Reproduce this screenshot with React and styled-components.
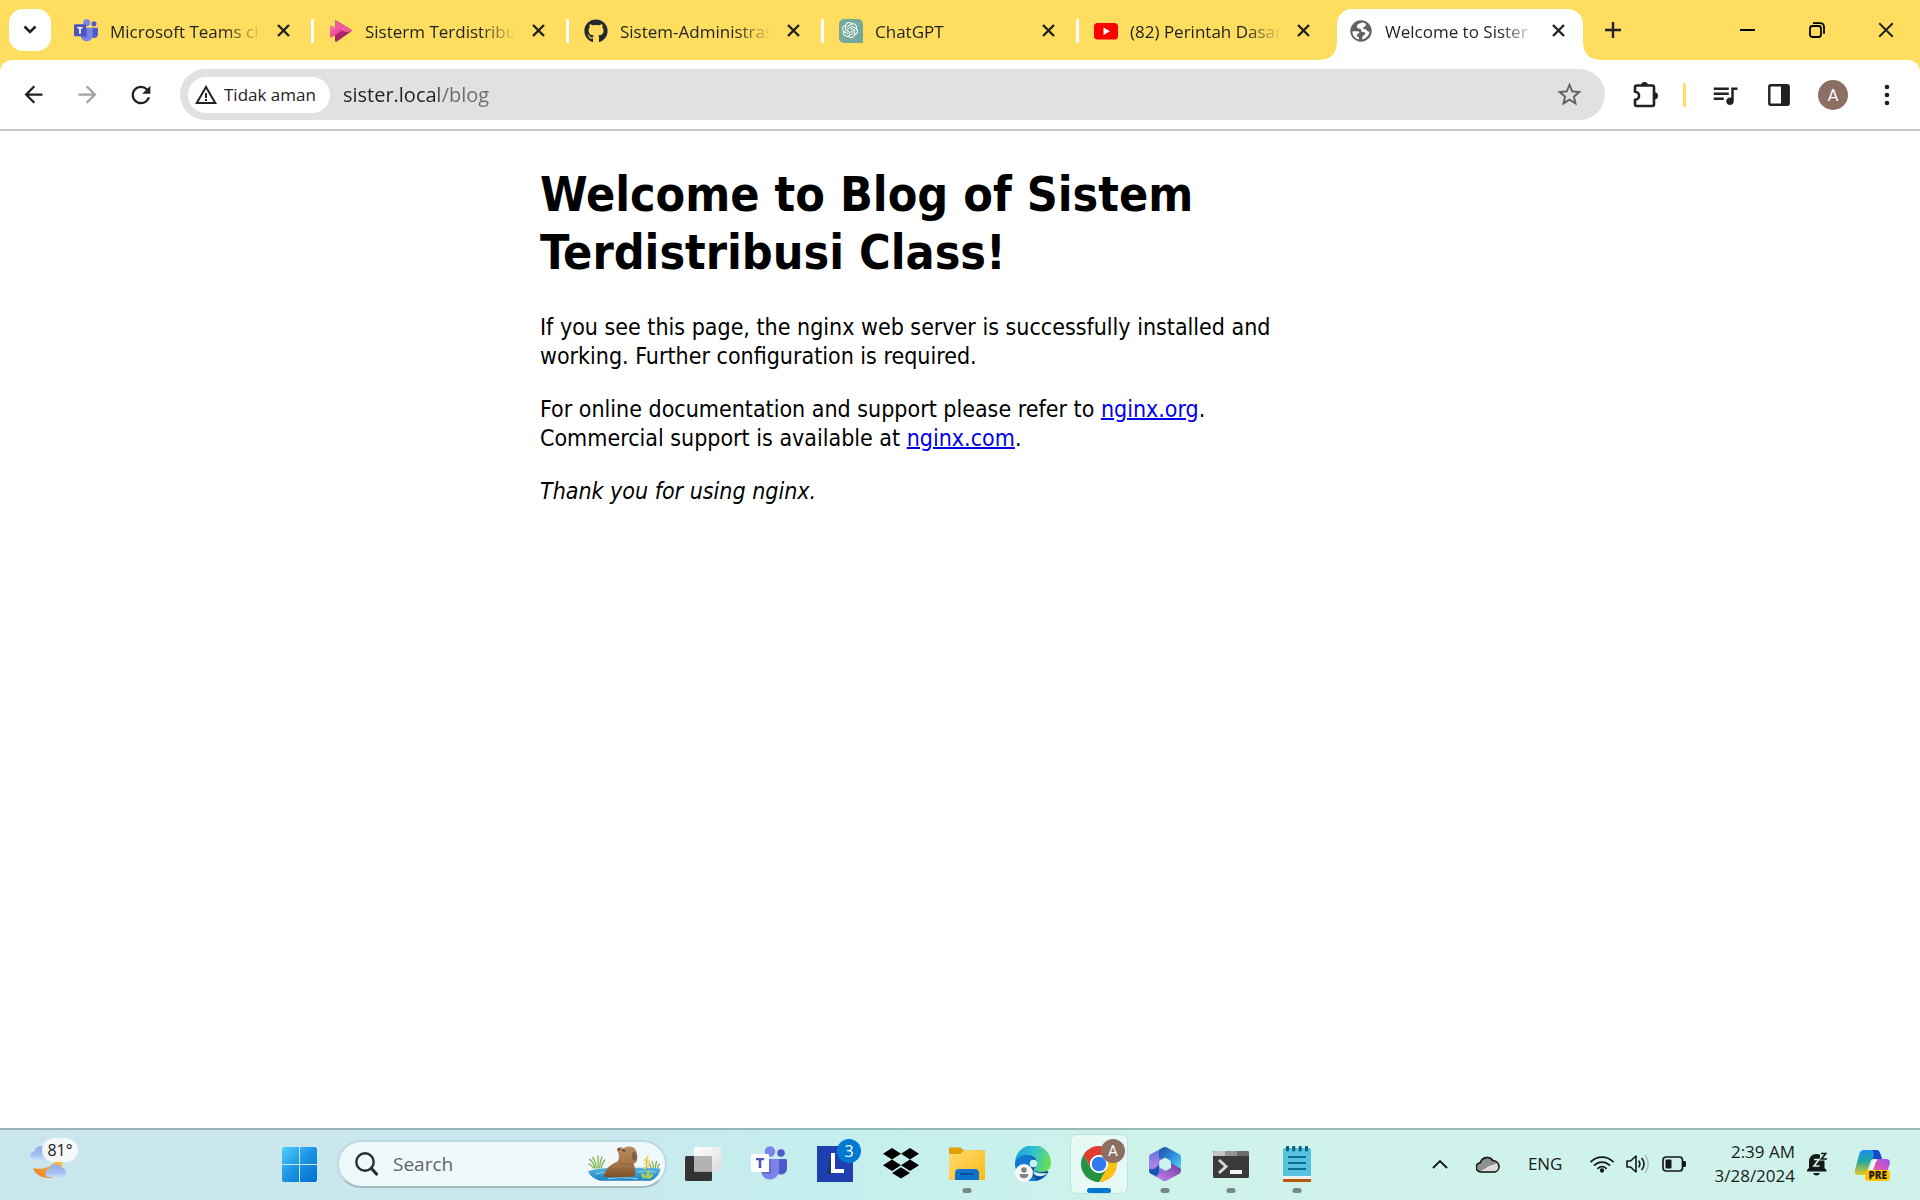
import React from "react";
import styled, { createGlobalStyle, css } from "styled-components";
import { FaGithub } from "react-icons/fa";
import { SiOpenai } from "react-icons/si";
import {
  MdArrowBack,
  MdArrowForward,
  MdRefresh,
  MdStarBorder,
  MdQueueMusic,
  MdWarningAmber,
} from "react-icons/md";

const ui = `"Open Sans", "Noto Sans", sans-serif`;
const yellow = "#ffdd5e";
const ink = "#1f2124";

const GlobalStyle = createGlobalStyle`
  *, *::before, *::after { box-sizing: border-box; }
  body { margin: 0; background: #fff; }
  button { border: 0; padding: 0; background: none; color: inherit; font: inherit; cursor: pointer; }
  input { border: 0; padding: 0; outline: 0; font: inherit; }
  svg { display: block; }
`;

const Screen = styled.div`
  display: flex;
  flex-direction: column;
  min-height: 100vh;
  font-family: ${ui};
`;

/* ---------- browser frame ---------- */

const Frame = styled.header`
  background: ${yellow};
  color: ${ink};
`;

const TabStrip = styled.nav`
  display: flex;
  align-items: flex-end;
  height: 60px;
  padding-left: 9px;
`;

const TabSearch = styled.button`
  display: grid;
  place-items: center;
  width: 42px;
  height: 42px;
  margin: 0 11px 9px 0;
  border-radius: 14px;
  background: #fff;
`;

const TabList = styled.ul`
  display: flex;
  align-items: flex-end;
  margin: 0;
  padding: 0;
  list-style: none;
`;

const TabDivider = styled.li`
  width: 3px;
  height: 24px;
  margin: 0 3px 17px;
  border-radius: 1px;
  background: ${(p) => (p.$hidden ? "transparent" : "#fff")};
`;

const TabItem = styled.li`
  position: relative;
  display: flex;
  align-items: center;
  gap: 12px;
  width: 246px;
  height: 51px;
  padding: 0 13px 8px 12px;
  border-radius: 15px 15px 0 0;
  ${(p) =>
    p.$active &&
    css`
      background: #fff;
      &::before,
      &::after {
        content: "";
        position: absolute;
        bottom: 0;
        width: 15px;
        height: 15px;
      }
      &::before {
        right: 100%;
        background: radial-gradient(circle at 0 0, transparent 14px, #fff 15px);
      }
      &::after {
        left: 100%;
        background: radial-gradient(circle at 100% 0, transparent 14px, #fff 15px);
      }
    `}
`;

const TabButton = styled.button`
  display: flex;
  flex: 1;
  align-items: center;
  gap: 12px;
  min-width: 0;
  text-align: left;
`;

const Favicon = styled.span`
  display: grid;
  flex: none;
  place-items: center;
  width: 24px;
  height: 24px;
`;

const TabTitle = styled.span`
  flex: 1;
  overflow: hidden;
  padding-top: 2px;
  font-size: 17px;
  line-height: 24px;
  white-space: nowrap;
  mask-image: linear-gradient(to right, #000 115px, transparent 152px);
`;

const SmallButton = styled.button`
  display: grid;
  flex: none;
  place-items: center;
  width: 24px;
  height: 24px;
`;

const NewTab = styled.button`
  display: grid;
  place-items: center;
  width: 42px;
  height: 42px;
  margin: 0 0 9px 9px;
`;

const WindowControls = styled.div`
  display: flex;
  align-self: stretch;
  margin-left: auto;
`;

const WindowButton = styled.button`
  display: grid;
  place-items: center;
  width: 69px;
  height: 59px;
`;

const Toolbar = styled.div`
  display: flex;
  align-items: center;
  gap: 12px;
  padding: 9px 12px;
  border-bottom: 2px solid #c9c9c9;
  border-radius: 12px 12px 0 0;
  background: #fff;
`;

const ToolButton = styled.button`
  display: grid;
  flex: none;
  place-items: center;
  width: 42px;
  height: 42px;
  color: ${(p) => (p.$muted ? "#a0a1a3" : ink)};
`;

const AddressBar = styled.form`
  display: flex;
  flex: 1;
  align-items: center;
  height: 51px;
  margin: 0 7px 0 6px;
  padding: 0 15px 0 8px;
  border-radius: 26px;
  background: #e1e1e1;
`;

const SecurityChip = styled.button`
  display: flex;
  flex: none;
  align-items: center;
  gap: 6px;
  height: 36px;
  padding: 0 14px 0 6px;
  border-radius: 18px;
  background: #fff;
  font-size: 17px;
  font-weight: 500;
`;

const AddressInput = styled.input`
  flex: 1;
  min-width: 0;
  height: 36px;
  margin-left: 13px;
  background: linear-gradient(to right, ${ink} 96px, #6a6c6e 96px);
  background-clip: text;
  color: transparent;
  font-size: 20px;
`;

const Bookmark = styled.button`
  display: grid;
  place-items: center;
  width: 42px;
  height: 42px;
  color: #606164;
`;

const ToolDivider = styled.span`
  width: 3px;
  height: 24px;
  margin: 0 6px 0 5px;
  border-radius: 1px;
  background: ${yellow};
`;

const Avatar = styled.span`
  display: grid;
  place-items: center;
  width: ${(p) => p.$size}px;
  height: ${(p) => p.$size}px;
  border-radius: 50%;
  background: #8d6e63;
  color: #fff;
  font-family: Roboto, sans-serif;
  font-size: ${(p) => (p.$size > 24 ? 17 : 15)}px;
`;

/* ---------- page ---------- */

const Viewport = styled.main`
  flex: 1;
  background: #fff;
`;

const Article = styled.article`
  max-width: 840px;
  margin: 0 auto;
  padding-top: 34px;
  color: #000;
  font-family: Tahoma, "DejaVu Sans Condensed", "Noto Sans", sans-serif;
  font-size: 23px;
  line-height: 29px;
`;

const Heading = styled.h1`
  margin: 0 0 32px;
  font-size: 48px;
  line-height: 58px;
`;

const Paragraph = styled.p`
  max-width: 760px;
  margin: 0 0 24px;
`;

const Link = styled.a`
  color: #0000ee;
  text-decoration-thickness: 2px;
`;

/* ---------- taskbar ---------- */

const Taskbar = styled.footer`
  display: flex;
  align-items: center;
  padding: 5px 30px 7px 0;
  border-top: 2px solid rgba(60, 80, 80, 0.35);
  background: linear-gradient(to right, #c9e6ec 0%, #c9e8ed 30%, #c4efee 44%, #cef3ea 60%, #cff3ea 100%);
  color: #1a1c1c;
`;

const WeatherArea = styled.div`
  flex: 0 0 271px;
  padding-left: 30px;
`;

const Weather = styled.button`
  position: relative;
  display: block;
  width: 48px;
  height: 54px;
`;

const Temperature = styled.span`
  position: absolute;
  top: 1px;
  right: 0;
  width: 36px;
  border-radius: 12px;
  background: rgba(250, 250, 250, 0.88);
  font-size: 16px;
  line-height: 24px;
  text-align: center;
`;

const Apps = styled.div`
  display: flex;
  align-items: center;
  gap: 10px;
`;

const AppButton = styled.button`
  position: relative;
  display: grid;
  place-items: center;
  width: 56px;
  height: 58px;
  border-radius: 6px;
  ${(p) =>
    p.$active &&
    css`
      background: rgba(255, 255, 255, 0.5);
      box-shadow: 0 0 0 1px rgba(160, 200, 190, 0.35);
    `}
`;

const Indicator = styled.span`
  position: absolute;
  bottom: 0;
  left: 50%;
  width: ${(p) => (p.$active ? 24 : 9)}px;
  height: 5px;
  border-radius: 3px;
  background: ${(p) => (p.$active ? "#0078d4" : "#778985")};
  transform: translateX(-50%);
`;

const Badge = styled.span`
  position: absolute;
  top: 4px;
  right: 2px;
  display: grid;
  place-items: center;
  width: 24px;
  height: 24px;
  border-radius: 50%;
  background: #0078d4;
  color: #fff;
  font-size: 16px;
  line-height: 24px;
`;

const AppAvatar = styled.span`
  position: absolute;
  top: 4px;
  right: 2px;
`;

const SearchBox = styled.label`
  display: flex;
  align-items: center;
  width: 330px;
  height: 48px;
  margin-right: -2px;
  padding: 0 3px 0 16px;
  border: 2px solid #bbd9df;
  border-bottom-color: #a2bcc1;
  border-radius: 24px;
  background: #eff8fb;
`;

const SearchInput = styled.input`
  flex: 1;
  min-width: 0;
  margin-left: 15px;
  background: none;
  font-size: 19px;
  &::placeholder {
    color: #5c6466;
    opacity: 1;
  }
`;

const Tray = styled.div`
  display: flex;
  align-items: center;
  margin-left: auto;
`;

const TrayButton = styled.button`
  display: flex;
  align-items: center;
  gap: 12px;
  margin-right: ${(p) => p.$after}px;
  font-size: 17px;
  line-height: 24px;
  text-align: right;
`;

const ClockLines = styled.span`
  display: grid;
  font-size: 17px;
  line-height: 24px;
`;

/* ---------- drawings ---------- */

const Close = ({ size = 13, w = 2.4 }) => (
  <svg width={size} height={size} viewBox="0 0 13 13" stroke="currentColor" strokeWidth={w} fill="none">
    <path d="M1 1l11 11M12 1L1 12" />
  </svg>
);

const TeamsIcon = ({ size, light }) => (
  <svg width={size} height={size} viewBox="0 0 36 36">
    <circle cx="30" cy="7" r="3.8" fill="#5059c9" />
    <path d="M25 13h9.500c.8 0 1.500.7 1.500 1.500V22c0 4-2.500 6.500-6 6.500-2 0-4-1-5-2.500z" fill="#5059c9" />
    <circle cx="19" cy="5.500" r="5.200" fill="#7b83eb" />
    <path d="M12 13h14.500c.8 0 1.500.7 1.500 1.500V24c0 5-3.700 9.500-9 9.500S10 29 10 24z" fill="#7b83eb" />
    <path d="M12 13h8v15h-9z" fill="#3d448f" opacity=".35" />
    <rect x="0" y="8" width="18" height="18" rx={light ? 0.5 : 1.5} fill={light ? "#fff" : "#4b53bc"} />
    <path d="M5 12h8v2.300h-2.700V22H7.700v-7.700H5z" fill={light ? "#4b53bc" : "#fff"} />
  </svg>
);

const StreamIcon = () => (
  <svg width="22" height="22" viewBox="0 0 22 22">
    <defs>
      <linearGradient id="streamA" x1="0" y1="0" x2="1" y2="1">
        <stop offset="0" stopColor="#ff7fb4" />
        <stop offset="1" stopColor="#d92c86" />
      </linearGradient>
    </defs>
    <path d="M5 1.500Q5 0 6.500.8L21 9.500q1.400 1 0 2L7 21.500q-2 1-2-1z" fill="#a92367" />
    <path d="M5 1.500Q5 0 6.500.8L21 9.500q1.400 1 0 2L16 12 5 9z" fill="#ee5b9d" />
    <path d="M0 6.500Q0 5 1.500 5.700L11 10.300q1.200.7 0 1.400L1.500 17.200Q0 18 0 16.500z" fill="url(#streamA)" />
  </svg>
);

const ChatGptIcon = () => (
  <svg width="24" height="24" viewBox="0 0 24 24">
    <path d="M5 0h14a5 5 0 0 1 5 5v19H5a5 5 0 0 1-5-5V5a5 5 0 0 1 5-5z" fill="#75a99b" />
    <SiOpenai x="3" y="3" width="18" height="18" color="#fff" />
  </svg>
);

const YoutubeIcon = () => (
  <svg width="24" height="24" viewBox="0 0 24 24">
    <rect x="0" y="4" width="24" height="16.500" rx="3.500" fill="#f00" />
    <path d="M9.500 8.500v7.500l6.500-3.700z" fill="#fff" />
  </svg>
);

const GlobeIcon = () => (
  <svg width="22" height="22" viewBox="0 0 22 22">
    <circle cx="11" cy="11" r="10.700" fill="#5f6368" />
    <path d="M12.500 2.400C8.500 3 6.800 5 6.800 6.500c0 1.800 1.400 2 3.200 2.200 1 .1 1.200.8 1.200 1.700 0 1 .9 1.600 2.300 1.600 1.500 0 2.200 1.200 1.400 2.300-.9 1.200-2.700 1.500-2.700 3.200v2c4-.8 7-4.200 7.300-8-.9.400-1.800 0-2.300-.8-.5-1-1.200-1.400-2.600-1.400-1.200 0-1.800-.7-1.300-1.700.5-.9 1.600-.8 2.300-1.600.6-.7.400-1.700-.4-2.700zM2.400 11.300c0 4.400 2.700 7.300 6.500 8.200v-2.200c-1.500-.3-2.200-1.200-2-2.600.2-1.200 1.600-1 2.300-1.700.5-.7-.1-1.700-1.400-1.700z" fill="#fff" />
  </svg>
);

const ExtensionIcon = () => (
  <svg width="27" height="27" viewBox="0 0 27 27">
    <path d="M3 6.200Q3 4.500 4.700 4.500H20.300Q22 4.500 22 6.200V23.300Q22 25 20.300 25H4.700Q3 25 3 23.300V18.800A4 4 0 0 0 3 10.700z" fill="none" stroke={ink} strokeWidth="2.600" strokeLinejoin="round" />
    <path d="M9 4.500a3.500 3.500 0 0 1 7 0zM22.500 11.200a3.500 3.500 0 0 1 0 7z" fill={ink} />
  </svg>
);

const SidePanelIcon = () => (
  <svg width="22" height="22" viewBox="0 0 22 22">
    <rect x="1.300" y="1.300" width="19.400" height="19.400" rx="1.500" fill="none" stroke={ink} strokeWidth="2.400" />
    <path d="M13 1h8v20h-8z" fill={ink} />
  </svg>
);

const DotsIcon = () => (
  <svg width="6" height="22" viewBox="0 0 6 22" fill={ink}>
    <circle cx="3" cy="3" r="2.300" />
    <circle cx="3" cy="11" r="2.300" />
    <circle cx="3" cy="19" r="2.300" />
  </svg>
);

const Cloud = ({ x, y, w }) => (
  <svg x={x} y={y} width={w} height={w * 0.66} viewBox="0 0 24 16">
    <path d="M5 15.500a4.500 4.500 0 0 1-.4-9A7 7 0 0 1 17.500 5 5.300 5.300 0 0 1 18.500 15.500z" fill="url(#cloudFill)" />
  </svg>
);

const WeatherIcon = () => (
  <svg width="40" height="54" viewBox="0 0 40 54">
    <defs>
      <linearGradient id="cloudFill" x1="0" y1="0" x2="0" y2="1">
        <stop offset="0" stopColor="#8fa9e6" />
        <stop offset=".7" stopColor="#a9c2f3" />
        <stop offset="1" stopColor="#c3dbfb" />
      </linearGradient>
      <linearGradient id="moon" x1="1" y1="0" x2="0" y2="1">
        <stop offset="0" stopColor="#ffd35a" />
        <stop offset="1" stopColor="#ee7a1c" />
      </linearGradient>
    </defs>
    <Cloud x="0" y="8" w="23" />
    <path d="M28 16c7 8 6 20-4 24-9 3-18-1-21-9 12 3 23-2 25-15z" fill="url(#moon)" />
    <Cloud x="15" y="26" w="22" />
  </svg>
);

const WindowsIcon = () => (
  <svg width="35" height="35" viewBox="0 0 35 35">
    <defs>
      <linearGradient id="win" x1="0" y1="0" x2="35" y2="35" gradientUnits="userSpaceOnUse">
        <stop offset="0" stopColor="#4fd0ff" />
        <stop offset=".5" stopColor="#1b93e2" />
        <stop offset="1" stopColor="#0070d0" />
      </linearGradient>
    </defs>
    <path fill="url(#win)" d="M1.500 0H17v17H0V1.500zM18 0h15.500L35 1.500V17H18zM0 18h17v17H1.500L0 33.500zM18 18h17v15.500L33.500 35H18z" />
  </svg>
);

const MagnifierIcon = () => (
  <svg width="23" height="24" viewBox="0 0 23 24" fill="none" stroke="#2b2e2f" strokeLinecap="round">
    <circle cx="10" cy="10" r="8.700" strokeWidth="2.400" />
    <path d="M16.500 16.500l5 5.500" strokeWidth="3.200" />
  </svg>
);

const CapybaraIcon = () => (
  <svg width="74" height="36" viewBox="0 0 222 108">
    <defs>
      <linearGradient id="water" x1="0" y1="0" x2="0" y2="1">
        <stop offset="0" stopColor="#52b4e4" />
        <stop offset="1" stopColor="#1f80bd" />
      </linearGradient>
      <linearGradient id="fur" x1="0" y1="0" x2="0" y2="1">
        <stop offset="0" stopColor="#b98a5f" />
        <stop offset=".6" stopColor="#a37345" />
        <stop offset="1" stopColor="#7b4f28" />
      </linearGradient>
    </defs>
    <g fill="none" stroke="#76ad42" strokeWidth="3.500" strokeLinecap="round">
      <path d="M20 66Q16 48 4 40M25 66Q22 45 14 34M30 66V30M35 66Q36 45 42 32M40 66Q43 50 50 42M16 66Q10 56 2 54" />
      <path d="M190 68Q186 56 184 52M196 68Q196 50 192 46M202 68Q204 50 206 46M208 68Q210 58 214 54" />
    </g>
    <path d="M0 76C30 64 70 66 110 67C150 64 190 66 218 68Q212 95 188 104H36Q10 98 0 76z" fill="url(#water)" />
    <path d="M22 84Q60 74 84 84M148 78Q180 72 205 78M60 98Q110 92 150 99" stroke="#8ad4f3" strokeWidth="3" fill="none" />
    <path d="M47 92C50 70 66 56 86 48C94 42 94 32 91 20C86 14 87 4 94 5C98 2 104 4 106 7C118 0 132 0 141 8C148 18 150 34 146 44C143 52 138 50 137 54C142 66 143 80 140 91Q95 96 47 92z" fill="url(#fur)" />
    <path d="M88 12q0-8 7-6 4 3 0 8z" fill="#6b4424" />
    <path d="M133 18Q143 14 146 26Q149 38 143 44Q134 44 132 36z" fill="#6a5548" opacity=".7" />
    <path d="M101 13q6-4 12 2q-6 3-12-2z" fill="#2c2119" />
    <path d="M97 50Q112 60 134 52" stroke="#875e39" strokeWidth="3" fill="none" opacity=".7" />
    <path d="M176 84V36" stroke="#8aae45" strokeWidth="3" />
    <g fill="#fbd873">
      <circle cx="178" cy="33" r="4.500" /><circle cx="171" cy="42" r="4.500" /><circle cx="181" cy="46" r="4.500" />
      <circle cx="172" cy="54" r="4.500" /><circle cx="180" cy="60" r="4.500" /><circle cx="170" cy="66" r="4" />
    </g>
    <path d="M164 97Q156 84 162 80Q172 84 174 94Q174 76 182 70Q188 80 184 92Q190 80 196 82Q196 92 188 98z" fill="#a5cf5d" />
  </svg>
);

const TaskViewIcon = () => (
  <svg width="36" height="34" viewBox="0 0 36 34">
    <defs>
      <linearGradient id="tv" x1="0" y1="0" x2="1" y2="1">
        <stop offset="0" stopColor="#fff" />
        <stop offset="1" stopColor="#dcdcdc" />
      </linearGradient>
    </defs>
    <rect x="0" y="9" width="27" height="25" rx="1.500" fill="#333" />
    <rect x="9" y="0" width="27" height="24.500" rx="1.500" fill="url(#tv)" />
    <path d="M9 9h18v15.500H9z" fill="#b3b3b3" />
  </svg>
);

const LIcon = () => (
  <svg width="36" height="36" viewBox="0 0 36 36">
    <path d="M0 0h36v36H0z" fill="#1f3fb0" />
    <path d="M14 8l-4 20h4z" fill="#123a5e" />
    <path d="M14 7h4v16h9v4H14z" fill="#fff" />
  </svg>
);

const DropboxIcon = () => (
  <svg width="36" height="32" viewBox="0 0 36 32" fill="#000">
    <path d="M9 0l9 5.700-9 5.700-9-5.700zM27 0l9 5.700-9 5.700-9-5.700zM9 11.600l9 5.700L9 23l-9-5.700zM27 11.600l9 5.700-9 5.700-9-5.700zM18 19.200l9 5.700-9 5.700-9-5.700z" />
  </svg>
);

const FolderIcon = () => (
  <svg width="36" height="34" viewBox="0 0 36 34">
    <defs>
      <linearGradient id="fold" x1="0" y1="0" x2="1" y2="1">
        <stop offset="0" stopColor="#ffdc74" />
        <stop offset="1" stopColor="#fcb813" />
      </linearGradient>
    </defs>
    <path d="M0 1.500Q0 .5 1 .5h10.500L15 3.500h20q1 0 1 1V10H0z" fill="#dfa008" />
    <path d="M0 7h11.500L15 3.500h20q1 0 1 1V32q0 1-1 1H1q-1 0-1-1z" fill="url(#fold)" />
    <path d="M6 33v-7q0-4 4-4h16q4 0 4 4v7z" fill="#0c74cc" />
    <path d="M11 27h14" stroke="#084f97" strokeWidth="2" />
  </svg>
);

const EdgeIcon = () => (
  <svg width="36" height="36" viewBox="0 0 36 36">
    <defs>
      <linearGradient id="edgeA" x1="0" y1=".3" x2="1" y2=".5">
        <stop offset="0" stopColor="#1aa0e0" />
        <stop offset=".5" stopColor="#2fc2cf" />
        <stop offset="1" stopColor="#6ce04e" />
      </linearGradient>
    </defs>
    <path d="M0 18A18 18 0 0 1 18 9c6 0 6 8 4 10 6 8 13 4 11 8A18 18 0 0 1 0 18z" fill="#0f4f9a" />
    <path d="M0 18C0 10 6 8 12 9c7 1 8 6 5 11-3 6 0 12 7 14A18 18 0 0 1 0 18z" fill="#1278cf" />
    <path d="M18 22c0 5 8 6 15 5-3 3-10 5-14 1z" fill="#c9f1ed" />
    <path d="M0 17A18 18 0 0 1 36 17c0 7-5 9-10 9-5 0-7-2-7-3 0-1 3-2 3-5.500C22 13 18 9 12 9 6 9 1 12 0 17z" fill="url(#edgeA)" />
    <circle cx="18.500" cy="17.500" r="3.800" fill="#c9f1ed" />
    <circle cx="9" cy="27" r="9" fill="#f7f7f7" />
    <circle cx="9" cy="24" r="2.800" fill="#838383" />
    <path d="M4.500 28h9c0 3-2 4.300-4.500 4.300S4.500 31 4.500 28z" fill="#838383" />
  </svg>
);

const ChromeIcon = () => (
  <svg width="36" height="36" viewBox="0 0 48 48">
    <path d="M24 12H44.780A24 24 0 0 0 3.220 12L13.610 30A12 12 0 0 1 24 12z" fill="#e33b2e" />
    <path d="M34.390 30L24 48A24 24 0 0 0 44.780 12H24A12 12 0 0 1 34.390 30z" fill="#fcc013" />
    <path d="M13.610 30L3.220 12A24 24 0 0 0 24 48L34.390 30A12 12 0 0 1 13.610 30z" fill="#229342" />
    <circle cx="24" cy="24" r="12" fill="#fff" />
    <circle cx="24" cy="24" r="9.700" fill="#2f7cf0" />
  </svg>
);

const Microsoft365Icon = () => (
  <svg width="32" height="34" viewBox="0 0 32 34">
    <defs>
      <linearGradient id="mA" x1="0" y1="0" x2="0" y2="1">
        <stop offset="0" stopColor="#4f6fd6" />
        <stop offset=".55" stopColor="#b184e8" />
        <stop offset="1" stopColor="#1d5cc0" />
      </linearGradient>
      <linearGradient id="mB" x1="0" y1="0" x2="1" y2="1">
        <stop offset="0" stopColor="#1b4f9e" />
        <stop offset=".5" stopColor="#2f8fe0" />
        <stop offset="1" stopColor="#5cd3f7" />
      </linearGradient>
      <linearGradient id="mC" x1="0" y1="1" x2="1" y2="0">
        <stop offset="0" stopColor="#ca86ec" />
        <stop offset="1" stopColor="#6a3a9f" />
      </linearGradient>
      <mask id="mRing">
        <path d="M16 3L29 10v14L16 31 3 24V10z" fill="#fff" stroke="#fff" strokeWidth="6" strokeLinejoin="round" />
        <path d="M16 12.500l4 2.200v4.600l-4 2.200-4-2.200v-4.600z" fill="#000" stroke="#000" strokeWidth="3.500" strokeLinejoin="round" />
      </mask>
    </defs>
    <g mask="url(#mRing)">
      <path d="M0 0h16v34H0z" fill="url(#mA)" />
      <path d="M10 0h22v23L20 15l-10-3z" fill="url(#mB)" />
      <path d="M32 22L22 16v5L10 27l-3 3 9 4h16z" fill="url(#mC)" />
      <path d="M10 17v6q0 4-3 5.500L0 26v-4q6 2 10-5z" fill="#1553ae" />
    </g>
  </svg>
);

const TerminalIcon = () => (
  <svg width="36" height="27" viewBox="0 0 36 27">
    <rect width="36" height="27" rx="1.500" fill="#3a3a3a" />
    <path d="M1.500 0H12v5H0V1.500z" fill="#c4c4c4" />
    <path d="M12 0h12v5H12z" fill="#949494" />
    <path d="M24 0h10.500L36 1.500V5H24z" fill="#6c6c6c" />
    <path d="M6 9l7 6.500L6 22" stroke="#d6d6d6" strokeWidth="3" fill="none" />
    <path d="M17 19h12v4H17z" fill="#f2f2f2" />
  </svg>
);

const NotepadIcon = () => (
  <svg width="28" height="36" viewBox="0 0 28 36">
    <path d="M0 32h28v4H0z" fill="#b8580f" />
    <path d="M0 29h28v4H0z" fill="#f1f1f1" />
    <path d="M0 3.500Q0 2 1.500 2h25Q28 2 28 3.500V30H0z" fill="#57c1e0" />
    <path d="M5 11h18M5 17h18M5 23h18" stroke="#0b6a94" strokeWidth="2" />
    <path d="M4.500 1v3M10.800 1v3M17.200 1v3M23.500 1v3" stroke="#0b5f80" strokeWidth="3" strokeLinecap="round" />
  </svg>
);

const OneDriveIcon = () => (
  <svg width="24" height="17" viewBox="0 0 24 17">
    <path d="M5.500 16A4.500 4.500 0 0 1 4.500 6.500 7 7 0 0 1 17 4.700a5.800 5.800 0 0 1 2 11.300z" fill="#ddd" />
    <path d="M4.500 6.500A7 7 0 0 1 17 4.700q3 .3 5 2.300l-9 3-8 5Q1 15 1 11t3.500-4.500z" fill="#8e9090" />
    <path d="M5.500 16A4.500 4.500 0 0 1 4.500 6.500 7 7 0 0 1 17 4.700a5.800 5.800 0 0 1 2 11.300z" fill="none" stroke="#111" strokeWidth="1.600" />
  </svg>
);

const WifiIcon = () => (
  <svg width="24" height="18" viewBox="0 0 24 18" fill="none" stroke="#15191a" strokeWidth="1.700" strokeLinecap="round">
    <path d="M1 6.700a15.500 15.500 0 0 1 22 0M4.500 10.200a10.500 10.500 0 0 1 15 0M8 13.400a5.600 5.600 0 0 1 8 0" />
    <circle cx="12" cy="15.500" r="1.300" fill="#15191a" />
  </svg>
);

const SpeakerIcon = () => (
  <svg width="24" height="20" viewBox="0 0 24 20" fill="none" stroke="#15191a" strokeWidth="1.600" strokeLinecap="round" strokeLinejoin="round">
    <path d="M1 7h3.500L10 2v16l-5.500-5H1z" />
    <path d="M13 7.200q1.800 2.800 0 5.600M16 4.500q4 5.500 0 11" />
    <path d="M19.300 1.500q6 8.500 0 17" stroke="#a9c4be" />
  </svg>
);

const BatteryIcon = () => (
  <svg width="24" height="16" viewBox="0 0 24 16">
    <rect x="1" y="1" width="19.500" height="14" rx="3" fill="none" stroke="#15191a" strokeWidth="1.700" />
    <rect x="3.500" y="3.500" width="6" height="9" rx="1" fill="#15191a" />
    <path d="M21 5h1.500q1.500 0 1.500 1.500v3q0 1.500-1.500 1.500H21z" fill="#15191a" />
  </svg>
);

const BellIcon = () => (
  <svg width="20" height="24" viewBox="0 0 20 24">
    <path d="M2 16V9.500C2 5 5 2 9.500 2c5 0 8 3 8 7.500V16l2 2v1.500H0V18zM6 21h7q-1 2.500-3.500 2.500T6 21z" fill="#15191a" />
    <path d="M13 0h7v8.500h-7z" fill="#cff3ea" />
    <path d="M7 7.500h5l-5 6.500h5.500" stroke="#cff3ea" strokeWidth="1.700" fill="none" />
    <path d="M14 1.500h4.800L14.500 7H20" stroke="#15191a" strokeWidth="1.700" fill="none" />
  </svg>
);

const PreLabel = styled.span`
  position: absolute;
  right: 0;
  bottom: 0;
  padding: 0 3px;
  border-radius: 3px;
  background: #ffc300;
  color: #1c1a08;
  font-size: 10px;
  font-weight: 800;
  line-height: 11px;
`;

const CopilotButton = styled.button`
  position: relative;
  width: 35px;
  height: 34px;
`;

const CopilotIcon = () => (
  <svg width="35" height="28" viewBox="0 0 35 28">
    <defs>
      <linearGradient id="cpA" x1="0" y1="0" x2="0" y2="1">
        <stop offset="0" stopColor="#1d8ff0" />
        <stop offset=".45" stopColor="#22a7a0" />
        <stop offset="1" stopColor="#e9c922" />
      </linearGradient>
      <linearGradient id="cpB" x1="1" y1="0" x2="0" y2="1">
        <stop offset="0" stopColor="#9a52ee" />
        <stop offset=".5" stopColor="#e255b5" />
        <stop offset="1" stopColor="#ff8a55" />
      </linearGradient>
    </defs>
    <path d="M9 0h12q3 0 4 3l2 6h-8q-3 0-4 4l-3 9q-1 3-4 3H3q-4 0-3-5L4 5q1-5 5-5z" fill="url(#cpA)" />
    <path d="M17 0h4q3 0 4 3l2 6h-9q2-6-1-9z" fill="#1746c9" />
    <path d="M22 9h9q4 0 4 4l-4 12q-1 3-4 3H9q4-1 5-4l1-2 5-9q1-4 2-4z" fill="url(#cpB)" />
    <path d="M14 24l4-12q1-3 5-2.500-2 1-3 4.500l-3 10z" fill="#f4fbfa" />
  </svg>
);

const tabs = [
  { title: "Microsoft Teams cla", icon: <TeamsIcon size={24} /> },
  { title: "Sisterm Terdistribus", icon: <StreamIcon /> },
  { title: "Sistem-Administras", icon: <FaGithub size={24} color="#24292f" /> },
  { title: "ChatGPT", icon: <ChatGptIcon /> },
  { title: "(82) Perintah Dasar", icon: <YoutubeIcon /> },
  { title: "Welcome to Sister", icon: <GlobeIcon />, active: true },
];

const apps = [
  { name: "Task view", icon: <TaskViewIcon /> },
  { name: "Teams", icon: <TeamsIcon size={36} light /> },
  { name: "L", icon: <LIcon />, badge: "3" },
  { name: "Dropbox", icon: <DropboxIcon /> },
  { name: "File Explorer", icon: <FolderIcon />, open: true },
  { name: "Edge", icon: <EdgeIcon /> },
  { name: "Chrome", icon: <ChromeIcon />, open: true, active: true, avatar: true },
  { name: "Microsoft 365", icon: <Microsoft365Icon />, open: true },
  { name: "Terminal", icon: <TerminalIcon />, open: true },
  { name: "Notepad", icon: <NotepadIcon />, open: true },
];

function BrowserFrame() {
  return (
    <Frame>
      <TabStrip>
        <TabSearch aria-label="Search tabs">
          <svg width="14" height="10" viewBox="0 0 14 10" fill="none" stroke={ink} strokeWidth="2.600">
            <path d="M1.500 1.500L7 7l5.500-5.500" />
          </svg>
        </TabSearch>
        <TabList>
          {tabs.map((tab, i) => (
            <React.Fragment key={tab.title}>
              {i > 0 && <TabDivider aria-hidden="true" $hidden={tab.active} />}
              <TabItem $active={tab.active}>
                <TabButton>
                  <Favicon>{tab.icon}</Favicon>
                  <TabTitle>{tab.title}</TabTitle>
                </TabButton>
                <SmallButton aria-label="Close tab">
                  <Close />
                </SmallButton>
              </TabItem>
            </React.Fragment>
          ))}
        </TabList>
        <NewTab aria-label="New tab">
          <svg width="16" height="16" viewBox="0 0 16 16" stroke={ink} strokeWidth="2.400">
            <path d="M8 0v16M0 8h16" />
          </svg>
        </NewTab>
        <WindowControls>
          <WindowButton aria-label="Minimize">
            <svg width="15" height="2" viewBox="0 0 15 2">
              <path d="M0 0h15v2H0z" />
            </svg>
          </WindowButton>
          <WindowButton aria-label="Restore">
            <svg width="16" height="16" viewBox="0 0 16 16" fill="none" stroke="#000" strokeWidth="1.800">
              <rect x="1" y="4" width="11" height="11" rx="2.500" />
              <path d="M4 1.200h7q4 0 4 4v6.500" />
            </svg>
          </WindowButton>
          <WindowButton aria-label="Close">
            <Close size={16} w={1.6} />
          </WindowButton>
        </WindowControls>
      </TabStrip>
      <Toolbar>
        <ToolButton aria-label="Back"><MdArrowBack size={27} /></ToolButton>
        <ToolButton aria-label="Forward" $muted><MdArrowForward size={27} /></ToolButton>
        <ToolButton aria-label="Reload"><MdRefresh size={28} /></ToolButton>
        <AddressBar onSubmit={(e) => e.preventDefault()}>
          <SecurityChip type="button">
            <MdWarningAmber size={24} />
            Tidak aman
          </SecurityChip>
          <AddressInput aria-label="Address" defaultValue="sister.local/blog" />
          <Bookmark type="button" aria-label="Bookmark">
            <MdStarBorder size={29} />
          </Bookmark>
        </AddressBar>
        <ToolButton aria-label="Extensions"><ExtensionIcon /></ToolButton>
        <ToolDivider />
        <ToolButton aria-label="Media"><MdQueueMusic size={30} /></ToolButton>
        <ToolButton aria-label="Side panel"><SidePanelIcon /></ToolButton>
        <ToolButton aria-label="Profile"><Avatar $size={30}>A</Avatar></ToolButton>
        <ToolButton aria-label="Menu"><DotsIcon /></ToolButton>
      </Toolbar>
    </Frame>
  );
}

function SystemTaskbar() {
  return (
    <Taskbar>
      <WeatherArea>
        <Weather aria-label="Weather">
          <WeatherIcon />
          <Temperature>81°</Temperature>
        </Weather>
      </WeatherArea>
      <Apps>
        <AppButton aria-label="Start"><WindowsIcon /></AppButton>
        <SearchBox>
          <MagnifierIcon />
          <SearchInput aria-label="Search" placeholder="Search" />
          <CapybaraIcon />
        </SearchBox>
        {apps.map((app) => (
          <AppButton key={app.name} aria-label={app.name} $active={app.active}>
            {app.icon}
            {app.badge && <Badge>{app.badge}</Badge>}
            {app.avatar && <AppAvatar><Avatar $size={24}>A</Avatar></AppAvatar>}
            {app.open && <Indicator $active={app.active} />}
          </AppButton>
        ))}
      </Apps>
      <Tray>
        <TrayButton aria-label="Hidden icons" $after={28}>
          <svg width="16" height="10" viewBox="0 0 16 10" fill="none" stroke="#15191a" strokeWidth="1.900">
            <path d="M1 9l7-7 7 7" />
          </svg>
        </TrayButton>
        <TrayButton aria-label="OneDrive" $after={28}><OneDriveIcon /></TrayButton>
        <TrayButton $after={28}>ENG</TrayButton>
        <TrayButton aria-label="Quick settings" $after={28}>
          <WifiIcon />
          <SpeakerIcon />
          <BatteryIcon />
        </TrayButton>
        <TrayButton $after={28}>
          <ClockLines>
            <span>2:39 AM</span>
            <span>3/28/2024</span>
          </ClockLines>
          <BellIcon />
        </TrayButton>
        <CopilotButton aria-label="Copilot">
          <CopilotIcon />
          <PreLabel>PRE</PreLabel>
        </CopilotButton>
      </Tray>
    </Taskbar>
  );
}

export default function App() {
  return (
    <Screen>
      <GlobalStyle />
      <BrowserFrame />
      <Viewport>
        <Article>
          <Heading>Welcome to Blog of Sistem Terdistribusi Class!</Heading>
          <Paragraph>
            If you see this page, the nginx web server is successfully installed and working.
            Further configuration is required.
          </Paragraph>
          <Paragraph>
            For online documentation and support please refer to <Link href="#org">nginx.org</Link>.
            <br />
            Commercial support is available at <Link href="#com">nginx.com</Link>.
          </Paragraph>
          <Paragraph>
            <em>Thank you for using nginx.</em>
          </Paragraph>
        </Article>
      </Viewport>
      <SystemTaskbar />
    </Screen>
  );
}
